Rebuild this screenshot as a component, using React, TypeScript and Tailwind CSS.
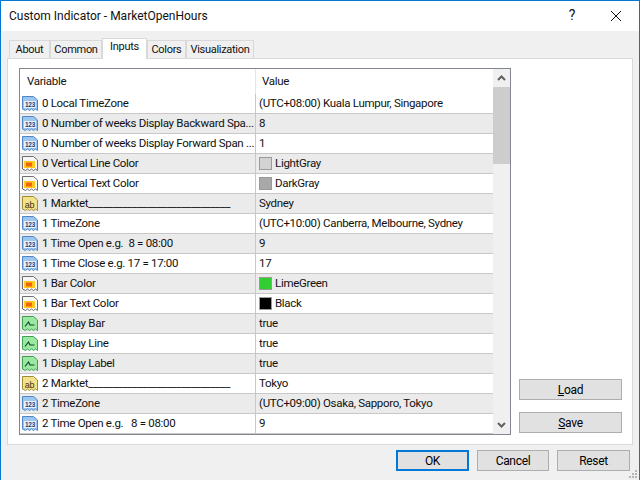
import React from "react";

type Kind = "num" | "color" | "ab" | "bool";
interface Row {
  kind: Kind;
  name: string;
  value: string;
  swatch?: string;
}

const rows: Row[] = [
  { kind: "num", name: "0 Local TimeZone", value: "(UTC+08:00) Kuala Lumpur, Singapore" },
  { kind: "num", name: "0 Number of weeks Display Backward Spa...", value: "8" },
  { kind: "num", name: "0 Number of weeks Display Forward Span ...", value: "1" },
  { kind: "color", name: "0 Vertical Line Color", value: "LightGray", swatch: "bg-[#d3d3d3]" },
  { kind: "color", name: "0 Vertical Text Color", value: "DarkGray", swatch: "bg-[#a9a9a9]" },
  { kind: "ab", name: "1 Marktet_____________________________", value: "Sydney" },
  { kind: "num", name: "1 TimeZone", value: "(UTC+10:00) Canberra, Melbourne, Sydney" },
  { kind: "num", name: "1 Time Open e.g.  8 = 08:00", value: "9" },
  { kind: "num", name: "1 Time Close e.g. 17 = 17:00", value: "17" },
  { kind: "color", name: "1 Bar Color", value: "LimeGreen", swatch: "bg-[#32cd32]" },
  { kind: "color", name: "1 Bar Text Color", value: "Black", swatch: "bg-black" },
  { kind: "bool", name: "1 Display Bar", value: "true" },
  { kind: "bool", name: "1 Display Line", value: "true" },
  { kind: "bool", name: "1 Display Label", value: "true" },
  { kind: "ab", name: "2 Marktet_____________________________", value: "Tokyo" },
  { kind: "num", name: "2 TimeZone", value: "(UTC+09:00) Osaka, Sapporo, Tokyo" },
  { kind: "num", name: "2 Time Open e.g.   8 = 08:00", value: "9" },
];

const tabs = [
  { label: "About", width: "w-[41px]" },
  { label: "Common", width: "w-[52px]" },
  { label: "Inputs", width: "w-[45px]" },
  { label: "Colors", width: "w-[39px]" },
  { label: "Visualization", width: "w-[68px]" },
];

const TornEdge = ({ stroke, fill }: { stroke: string; fill: string }) => (
  <path
    d="M0.5 0.5H11.5L15.5 4V14.5L13.5 13L11.5 14.5L9.5 13L7.5 14.5L5.5 13L3.5 14.5L0.5 13Z"
    fill={fill}
    stroke={stroke}
    strokeWidth="1"
  />
);

const RowIcon = ({ kind }: { kind: Kind }) => {
  if (kind === "num") {
    return (
      <svg width="16" height="16" viewBox="0 0 16 16" className="shrink-0">
        <TornEdge stroke="#4f86c6" fill="#9cc6ee" />
        <rect x="2" y="5" width="12" height="7" fill="#e8f3fc" />
        <text x="8" y="11" textAnchor="middle" fontSize="6.5" fontWeight="700" fill="#1d3f78" fontFamily="'Liberation Sans', sans-serif">123</text>
      </svg>
    );
  }
  if (kind === "color") {
    return (
      <svg width="16" height="16" viewBox="0 0 16 16" className="shrink-0">
        <TornEdge stroke="#6e6e6e" fill="#f6f6f6" />
        <rect x="2" y="5" width="11" height="7" fill="#ffc81e" />
        <rect x="4" y="6.5" width="6" height="4" fill="#f2640c" />
      </svg>
    );
  }
  if (kind === "ab") {
    return (
      <svg width="16" height="16" viewBox="0 0 16 16" className="shrink-0">
        <TornEdge stroke="#a08c30" fill="#f3e28c" />
        <text x="7.5" y="11.5" textAnchor="middle" fontSize="9" fill="#3a3410" fontFamily="'Liberation Sans', sans-serif">ab</text>
      </svg>
    );
  }
  return (
    <svg width="16" height="16" viewBox="0 0 16 16" className="shrink-0">
      <TornEdge stroke="#3f9f55" fill="#9be8a0" />
      <path d="M3 10.5L6.5 6L8 9H12.5" fill="none" stroke="#0f4a26" strokeWidth="1.2" />
    </svg>
  );
};

const Btn = ({ label, hot, rest, primary, width }: { label?: string; hot?: string; rest?: string; primary?: boolean; width: string }) => (
  <button
    className={`h-[21px] ${width} bg-[#e1e1e1] text-[12px] tracking-[-0.3px] text-black flex items-center justify-center ${
      primary ? "border-2 border-[#0078d7]" : "border border-[#adadad]"
    }`}
  >
    {hot ? <span className="underline">{hot}</span> : null}
    {rest ?? label}
  </button>
);

export default function App() {
  return (
    <div className="w-[640px] h-[480px] overflow-hidden flex flex-col bg-[#f0f0f0] border-x border-t border-[#0078d7] font-['Roboto','Noto_Sans',sans-serif] text-[11.5px] tracking-[-0.3px] text-[#111]">
      {/* title bar */}
      <div className="h-[30px] shrink-0 bg-white flex items-center pl-[8px] pr-[15px]">
        <span className="text-[12px] tracking-normal flex-1">Custom Indicator - MarketOpenHours</span>
        <span className="text-[14px] mr-[35px] -mt-[2px]">?</span>
        <svg width="12" height="12" viewBox="0 0 12 12" className="mr-[2px]">
          <path d="M1 1L11 11M11 1L1 11" stroke="#111" strokeWidth="1" />
        </svg>
      </div>

      {/* tab strip */}
      <div className="h-[27px] shrink-0 flex items-end pl-[8px] text-[11px]">
        {tabs.map((t) => (
          <div
            key={t.label}
            className={
              t.label === "Inputs"
                ? `${t.width} h-[21px] bg-white border border-b-0 border-[#d9d9d9] flex items-center justify-center -mb-px z-10 pb-[3px]`
                : `${t.width} h-[18px] pt-[1px] bg-[#f0f0f0] border border-b-0 border-[#d9d9d9] flex items-center justify-center`
            }
          >
            {t.label}
          </div>
        ))}
      </div>

      {/* tab panel */}
      <div className="ml-[6px] w-[626px] h-[387px] shrink-0 bg-white border border-[#d9d9d9] pl-[11px] pt-[9px] flex gap-[8px]">
        <div className="w-[492px] h-[367px] shrink-0 border border-[#828790] flex">
          <div className="flex-1 min-w-0">
            <div className="h-[25px] flex items-center bg-white">
              <div className="w-[236px] h-full pl-[7px] pt-[1px] flex items-center border-r border-[#e5e5e5]">Variable</div>
              <div className="pl-[6px] pt-[1px]">Value</div>
            </div>
            {rows.map((r, i) => (
              <div
                key={i}
                className={`h-[20px] flex items-center border-b border-[#c8c8c8] ${i % 2 === 1 ? "bg-[#ebebeb]" : "bg-white"}`}
              >
                <div className="w-[236px] h-full pl-[2px] flex items-center gap-[4px] border-r border-[#c8c8c8] overflow-hidden whitespace-pre">
                  <RowIcon kind={r.kind} />
                  <span>{r.name}</span>
                </div>
                <div className="pl-[3px] flex items-center gap-[3px] whitespace-pre">
                  {r.swatch ? <span className={`w-[13px] h-[13px] border border-[#9a9a9a] ${r.swatch}`} /> : null}
                  <span>{r.value}</span>
                </div>
              </div>
            ))}
          </div>

          {/* scrollbar */}
          <div className="w-[17px] shrink-0 bg-[#f0f0f0] flex flex-col">
            <div className="h-[18px] flex items-center justify-center">
              <svg width="9" height="6" viewBox="0 0 9 6">
                <path d="M1 5L4.5 1.5L8 5" fill="none" stroke="#606060" strokeWidth="2" />
              </svg>
            </div>
            <div className="h-[77px] bg-[#cdcdcd]" />
            <div className="flex-1" />
            <div className="h-[18px] flex items-center justify-center">
              <svg width="9" height="6" viewBox="0 0 9 6">
                <path d="M1 1L4.5 4.5L8 1" fill="none" stroke="#606060" strokeWidth="2" />
              </svg>
            </div>
          </div>
        </div>

        <div className="flex-1 flex flex-col items-start justify-end gap-[12px] pb-[11px]">
          <Btn hot="L" rest="oad" width="w-[103px]" />
          <Btn hot="S" rest="ave" width="w-[103px]" />
        </div>
      </div>

      {/* footer */}
      <div className="relative flex-1 flex justify-end gap-[8px] pt-[5px] pr-[9px]">
        <Btn label="OK" primary width="w-[73px]" />
        <Btn label="Cancel" width="w-[72px]" />
        <Btn label="Reset" width="w-[73px]" />
        <svg width="10" height="10" viewBox="0 0 10 10" className="absolute right-[1px] bottom-[1px]">
          <g fill="#b5b5b5">
            <rect x="7" y="1" width="2" height="2" />
            <rect x="4" y="4" width="2" height="2" />
            <rect x="7" y="4" width="2" height="2" />
            <rect x="1" y="7" width="2" height="2" />
            <rect x="4" y="7" width="2" height="2" />
            <rect x="7" y="7" width="2" height="2" />
          </g>
        </svg>
      </div>
    </div>
  );
}
